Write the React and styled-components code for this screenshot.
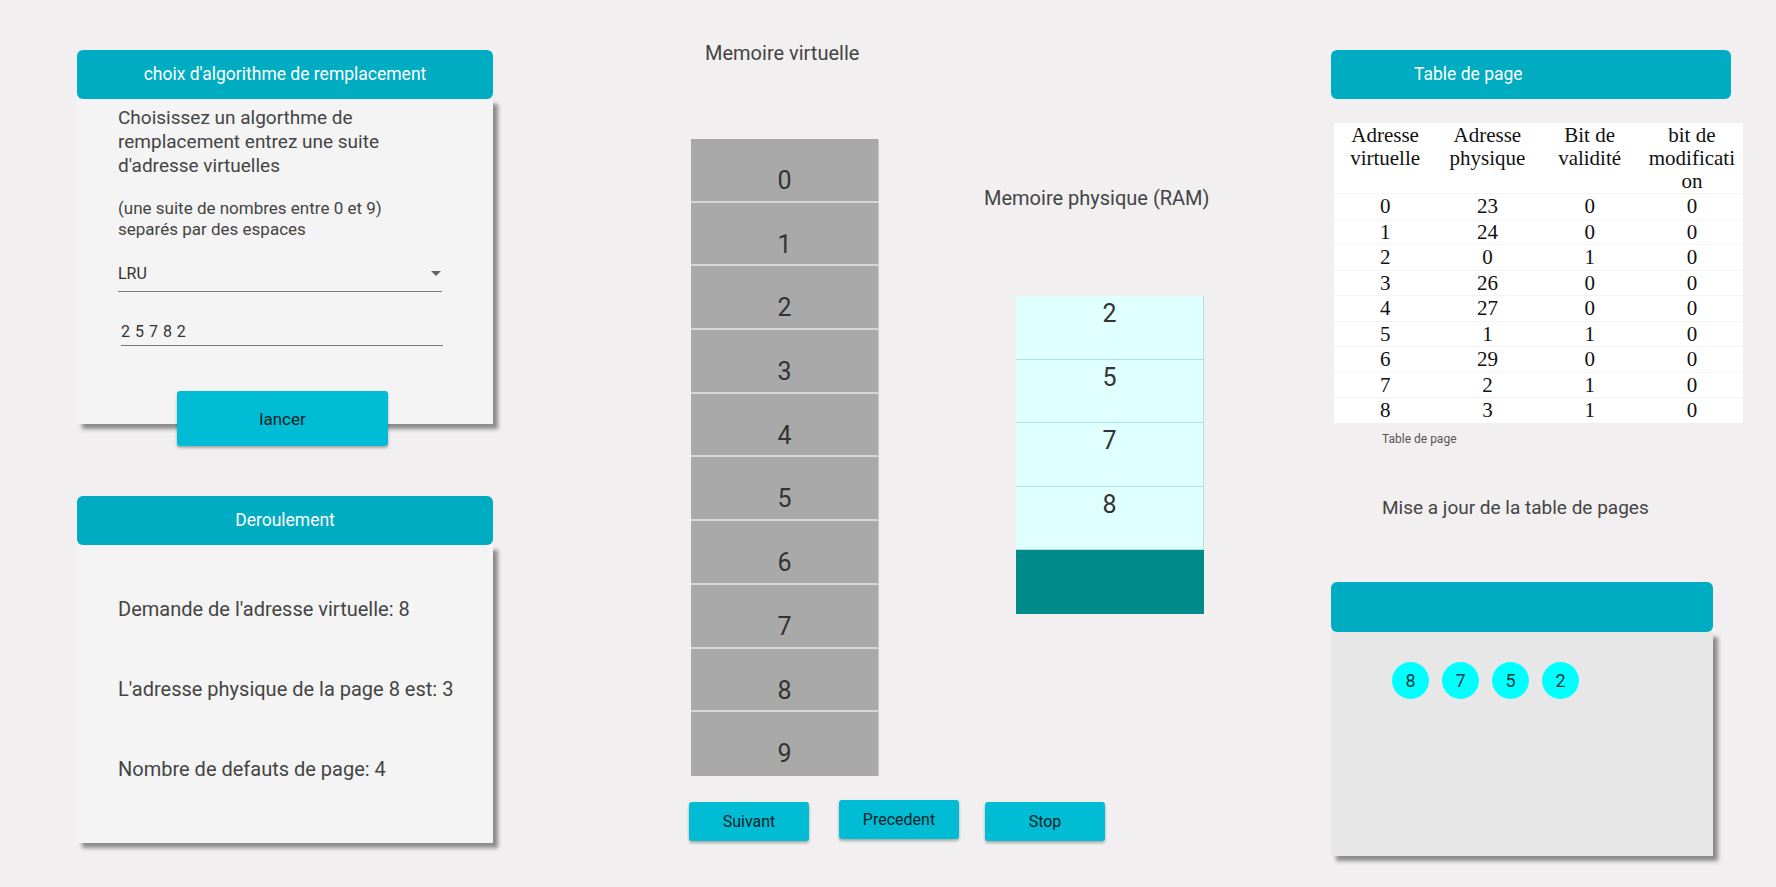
import React from 'react';
import styled, { createGlobalStyle } from 'styled-components';

const GlobalStyle = createGlobalStyle`
  html, body {
    margin: 0;
    padding: 0;
    background: #f1eff0;
  }
  body {
    font-family: Roboto, "Liberation Sans", sans-serif;
    color: #444;
  }
`;

const Page = styled.div`
  display: flex;
  align-items: flex-start;
  width: 1776px;
  height: 887px;
  box-sizing: border-box;
  padding: 42px 0 0 77px;
`;

const Column = styled.div`
  display: flex;
  flex-direction: column;
  align-items: flex-start;
  flex-shrink: 0;
  width: ${props => props.width}px;
  margin-left: ${props => props.offset || 0}px;
  padding-top: ${props => props.top || 0}px;
`;

const CardHeader = styled.div`
  width: ${props => props.width || 416}px;
  height: ${props => props.height || 49}px;
  box-sizing: border-box;
  margin-top: ${props => props.top || 0}px;
  padding-left: ${props => props.indent || 0}px;
  border-radius: 6px;
  background: #00acc1;
  color: #ffffff;
  font-size: 17.5px;
  line-height: ${props => props.height || 49}px;
  text-align: ${props => (props.indent ? 'left' : 'center')};
`;

const CardBody = styled.div`
  display: flex;
  flex-direction: column;
  align-items: flex-start;
  width: ${props => props.width || 416}px;
  min-height: ${props => props.minHeight || 0}px;
  box-sizing: border-box;
  padding: ${props => props.pad};
  background: ${props => props.bg || '#f4f4f4'};
  box-shadow: 5px 5px 4px rgba(0, 0, 0, 0.42);
`;

const Intro = styled.p`
  margin: 0;
  width: 320px;
  font-size: 19px;
  line-height: 24px;
`;

const Note = styled.p`
  margin: 20px 0 0;
  font-size: 17px;
  line-height: 21px;
`;

const SelectBox = styled.div`
  position: relative;
  width: 324px;
  height: 29px;
  margin-top: 22px;
  border-bottom: 1.5px solid #777;
  font-size: 16px;
  line-height: 23px;
  color: #333;

  &::after {
    content: '';
    position: absolute;
    right: 1px;
    top: 9px;
    border-left: 5px solid transparent;
    border-right: 5px solid transparent;
    border-top: 5px solid #666;
  }
`;

const TextInput = styled.input`
  width: 322px;
  height: 29px;
  margin: 25px 0 0 3px;
  padding: 0;
  box-sizing: border-box;
  border: none;
  border-bottom: 1.5px solid #777;
  background: transparent;
  font-family: Roboto, "Liberation Sans", sans-serif;
  font-size: 16px;
  letter-spacing: 0.5px;
  color: #333;
  outline: none;
`;

const ActionButton = styled.button`
  width: ${props => props.w}px;
  height: ${props => props.h}px;
  margin: ${props => props.m || 0};
  padding: 0;
  border: none;
  border-radius: 3px;
  background: #00bcd4;
  box-shadow: 0 2px 3px rgba(0, 0, 0, 0.3);
  font-family: Roboto, "Liberation Sans", sans-serif;
  font-size: ${props => props.fs || 16}px;
  color: #0d2326;
  cursor: pointer;
`;

const StepLine = styled.p`
  margin: ${props => (props.first ? '0' : '56px')} 0 0;
  font-size: 20px;
  line-height: 24px;
`;

const MemoryRow = styled.div`
  display: flex;
  align-items: flex-start;
`;

const MemoryStack = styled.div`
  display: flex;
  flex-direction: column;
  align-items: flex-start;
  flex-shrink: 0;
  margin-left: ${props => props.offset || 0}px;
  padding-top: ${props => props.top || 0}px;
`;

const MemoryTitle = styled.div`
  margin-left: ${props => props.indent || 0}px;
  font-size: 20px;
  line-height: 22px;
  white-space: nowrap;
  color: #444;
`;

const CellList = styled.div`
  display: flex;
  flex-direction: column;
  width: 188px;
  margin: ${props => props.m};
`;

const VirtualCell = styled.div`
  height: 63.7px;
  box-sizing: border-box;
  padding-top: 28px;
  background: #a9a9a9;
  border-bottom: ${props => (props.last ? 'none' : '2px solid #d6d6d6')};
  border-right: 1px solid #c8c8c8;
  font-size: 25px;
  line-height: 28px;
  text-align: center;
  color: #333;
`;

const PhysicalCell = styled.div`
  height: 63.5px;
  box-sizing: border-box;
  padding-top: 4px;
  background: ${props => (props.free ? '#008b8b' : '#e0ffff')};
  border-bottom: ${props => (props.free ? 'none' : '1.5px solid #b0e0e6')};
  border-right: ${props => (props.free ? 'none' : '1px solid #b0e0e6')};
  font-size: 25px;
  line-height: 28px;
  text-align: center;
  color: #333;
`;

const ButtonRow = styled.div`
  display: flex;
  align-items: flex-start;
  margin: 24px 0 0 -2px;
`;

const PageTable = styled.table`
  width: 409px;
  margin: 24px 0 0 3px;
  border-collapse: collapse;
  table-layout: fixed;
  background: #ffffff;
  font-family: "Liberation Serif", "DejaVu Serif", serif;
  color: #111;
`;

const HeadCell = styled.th`
  height: 70px;
  padding: 1px 0 0;
  box-sizing: border-box;
  vertical-align: top;
  font-weight: normal;
  font-size: 21px;
  line-height: 23px;
`;

const DataCell = styled.td`
  height: 24.5px;
  padding: 0;
  border-top: 1px solid #f4f4f4;
  font-size: 21px;
  line-height: 24px;
  text-align: center;
`;

const Caption = styled.div`
  margin: 9px 0 0 51px;
  font-size: 12px;
  line-height: 14px;
  color: #555;
`;

const SectionTitle = styled.div`
  margin: 50px 0 0 51px;
  font-size: 19px;
  line-height: 24px;
  color: #444;
`;

const QueueRow = styled.div`
  display: flex;
  gap: 13px;
`;

const Bubble = styled.div`
  width: 37px;
  height: 37px;
  border-radius: 50%;
  background: #00ffff;
  font-size: 18px;
  line-height: 37px;
  text-align: center;
  color: #1f3a3a;
`;

const virtualPages = [0, 1, 2, 3, 4, 5, 6, 7, 8, 9];
const frames = [2, 5, 7, 8];
const pageTable = [
  [0, 23, 0, 0],
  [1, 24, 0, 0],
  [2, 0, 1, 0],
  [3, 26, 0, 0],
  [4, 27, 0, 0],
  [5, 1, 1, 0],
  [6, 29, 0, 0],
  [7, 2, 1, 0],
  [8, 3, 1, 0],
];
const lruQueue = [8, 7, 5, 2];

const App = () => (
  <>
    <GlobalStyle />
    <Page>
      <Column width={416} top={8}>
        <CardHeader>choix d'algorithme de remplacement</CardHeader>
        <CardBody pad="7px 0 0 41px">
          <Intro>Choisissez un algorthme de remplacement entrez une suite d'adresse virtuelles</Intro>
          <Note>
            (une suite de nombres entre 0 et 9)
            <br />
            separés par des espaces
          </Note>
          <SelectBox>LRU</SelectBox>
          <TextInput readOnly value="2 5 7 8 2" />
          <ActionButton w={211} h={55} fs={17} m="45px 0 -22px 59px">
            lancer
          </ActionButton>
        </CardBody>

        <CardHeader top={72}>Deroulement</CardHeader>
        <CardBody pad="52px 0 62px 41px">
          <StepLine first>Demande de l'adresse virtuelle: 8</StepLine>
          <StepLine>L'adresse physique de la page 8 est: 3</StepLine>
          <StepLine>Nombre de defauts de page: 4</StepLine>
        </CardBody>
      </Column>

      <Column width={513} offset={198}>
        <MemoryRow>
          <MemoryStack>
            <MemoryTitle indent={14}>Memoire virtuelle</MemoryTitle>
            <CellList m="75px 0 0 0">
              {virtualPages.map((p, i) => (
                <VirtualCell key={p} last={i === virtualPages.length - 1}>
                  {p}
                </VirtualCell>
              ))}
            </CellList>
          </MemoryStack>
          <MemoryStack offset={105} top={145}>
            <MemoryTitle>Memoire physique (RAM)</MemoryTitle>
            <CellList m="87px 0 0 32px">
              {frames.map(f => (
                <PhysicalCell key={f}>{f}</PhysicalCell>
              ))}
              <PhysicalCell free />
            </CellList>
          </MemoryStack>
        </MemoryRow>
        <ButtonRow>
          <ActionButton w={120} h={39} m="2px 0 0 0">Suivant</ActionButton>
          <ActionButton w={120} h={39} m="0 0 0 30px">Precedent</ActionButton>
          <ActionButton w={120} h={39} m="2px 0 0 26px">Stop</ActionButton>
        </ButtonRow>
      </Column>

      <Column width={412} offset={127} top={8}>
        <CardHeader width={400} indent={83}>Table de page</CardHeader>
        <PageTable>
          <thead>
            <tr>
              <HeadCell>Adresse virtuelle</HeadCell>
              <HeadCell>Adresse physique</HeadCell>
              <HeadCell>Bit de validité</HeadCell>
              <HeadCell>
                bit de modificati
                <br />
                on
              </HeadCell>
            </tr>
          </thead>
          <tbody>
            {pageTable.map(row => (
              <tr key={row[0]}>
                {row.map((v, i) => (
                  <DataCell key={i}>{v}</DataCell>
                ))}
              </tr>
            ))}
          </tbody>
        </PageTable>
        <Caption>Table de page</Caption>
        <SectionTitle>Mise a jour de la table de pages</SectionTitle>
        <CardHeader width={382} height={50} top={62} />
        <CardBody width={382} minHeight={224} pad="30px 0 0 61px" bg="#e8e7e7">
          <QueueRow>
            {lruQueue.map(n => (
              <Bubble key={n}>{n}</Bubble>
            ))}
          </QueueRow>
        </CardBody>
      </Column>
    </Page>
  </>
);

export default App;
